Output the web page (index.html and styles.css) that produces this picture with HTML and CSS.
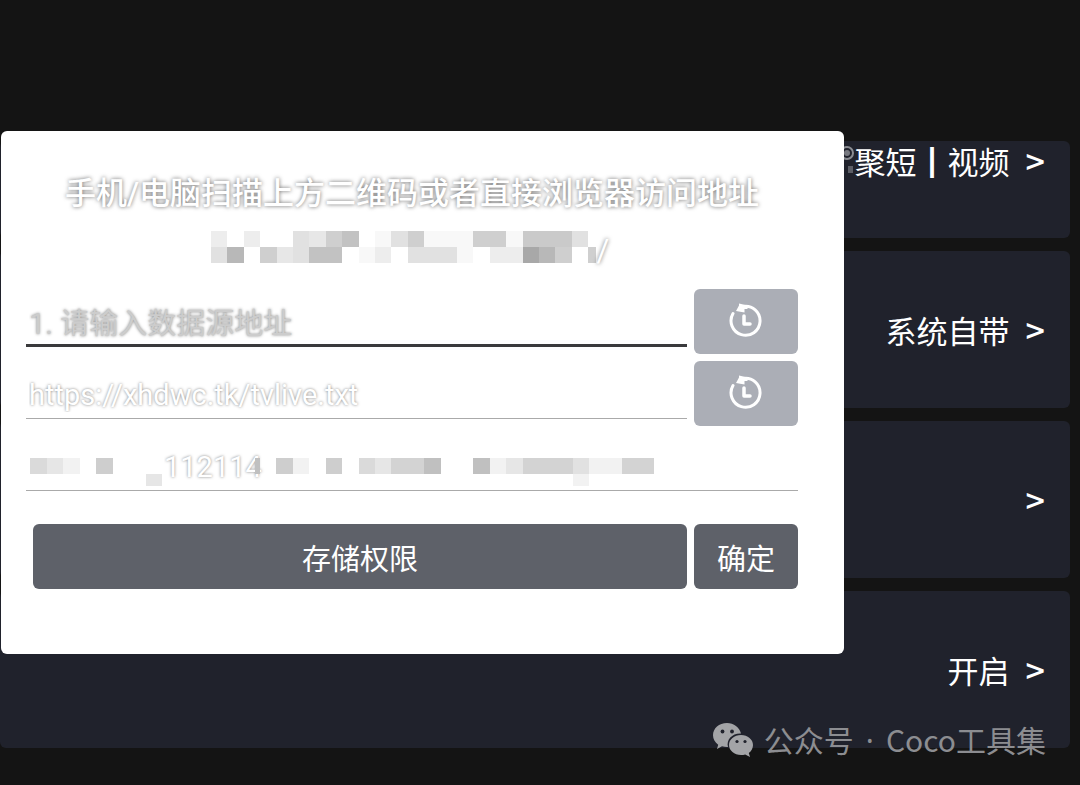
FILE: index.html
```html
<!DOCTYPE html>
<html lang="zh-CN">
<head>
    <meta charset="UTF-8">
    <meta name="viewport" content="width=device-width, initial-scale=1.0">
    <title>设置</title>
    <link rel="stylesheet" href="styles.css">
</head>
<body>

    <!-- Settings list -->
    <main class="settings">
        <a class="setting setting-scrolled" href="#">
            <span class="setting-value">
                <svg class="badge" width="12" height="32" viewBox="0 0 12 32" aria-hidden="true">
                    <circle cx="4" cy="8" r="6" fill="none" stroke="#8a8c92" stroke-width="2"/>
                    <circle cx="4" cy="8" r="3" fill="#777980"/>
                    <rect x="5" y="21" width="5" height="7" fill="#5c5e66"/>
                </svg>聚短┃视频</span>
            <span class="arrow">&gt;</span>
        </a>
        <a class="setting" href="#">
            <span class="setting-value">系统自带</span>
            <span class="arrow">&gt;</span>
        </a>
        <a class="setting" href="#">
            <span class="arrow">&gt;</span>
        </a>
        <a class="setting" href="#">
            <span class="setting-value">开启</span>
            <span class="arrow">&gt;</span>
        </a>
    </main>

    <!-- Data source dialog -->
    <form class="dialog">
        <h1 class="dialog-title">手机/电脑扫描上方二维码或者直接浏览器访问地址</h1>
        <div class="address">
            <svg class="mosaic" width="386" height="40" viewBox="0 0 386 40" shape-rendering="crispEdges" aria-hidden="true">
                <g transform="translate(0 4) scale(16.4 16)">
                    <path fill="#ededed" d="M0 0h1v1H0zM2 0h1v1H2zM10 1h1v1h-1zM17 1h2v1h-2z"/>
                    <path fill="#e1e1e1" d="M5 0h1v1H5zM11 0h1v1h-1zM22 0h1v1h-1zM0 1h1v1H0zM5 1h1v1H5zM12 1h3v1h-3z"/>
                    <path fill="#e7e7e7" d="M6 0h1v1H6zM4 1h1v1H4z"/>
                    <path fill="#cfcfcf" d="M7 0h1v1H7zM12 0h1v1h-1zM16 0h2v1h-2zM3 1h1v1H3zM21 1h1v1h-1zM23 1h.5v1H23z"/>
                    <path fill="#c2c2c2" d="M8 0h1v1H8zM6 1h2v1H6z"/>
                    <path fill="#cacaca" d="M19 0h3v1h-3z"/>
                    <path fill="#f8f8f8" d="M10 0h1v1h-1zM13 0h3v1h-3zM18 0h1v1h-1zM9 1h1v1H9zM15 1h1v1h-1z"/>
                    <path fill="#b8b8b8" d="M1 1h1v1H1zM20 1h1v1h-1z"/>
                    <path fill="#a8a8a8" d="M19 1h1v1h-1z"/>
                </g>
            </svg><span class="address-end">/</span>
        </div>

        <div class="field-row">
            <input class="field field-active" type="text" placeholder="1. 请输入数据源地址" aria-label="数据源地址">
            <button class="btn btn-history" type="button" aria-label="数据源历史">
                <svg width="36" height="36" viewBox="0 0 36 36" fill="none" stroke="#fff" stroke-width="3" aria-hidden="true">
                    <path d="M5 11.500A14.500 14.500 0 1 0 15 4.500" stroke-linecap="round"/>
                    <path d="M16 14v8h6" stroke-width="3.500" stroke-linecap="round" stroke-linejoin="round"/>
                    <path d="M11 1.500v2L8 9l8.500 1.500V7h3V3.500z" fill="#fff" stroke="none"/>
                </svg>
            </button>
        </div>

        <div class="field-row">
            <input class="field" type="text" value="https://xhdwc.tk/tvlive.txt" aria-label="直播地址">
            <button class="btn btn-history" type="button" aria-label="直播历史">
                <svg width="36" height="36" viewBox="0 0 36 36" fill="none" stroke="#fff" stroke-width="3" aria-hidden="true">
                    <path d="M5 11.500A14.500 14.500 0 1 0 15 4.500" stroke-linecap="round"/>
                    <path d="M16 14v8h6" stroke-width="3.500" stroke-linecap="round" stroke-linejoin="round"/>
                    <path d="M11 1.500v2L8 9l8.500 1.500V7h3V3.500z" fill="#fff" stroke="none"/>
                </svg>
            </button>
        </div>

        <div class="field-row">
            <input class="field field-masked" type="text" value="112114" aria-label="备用地址">
            <svg class="field-mosaic" width="640" height="30" viewBox="0 0 640 30" shape-rendering="crispEdges" aria-hidden="true">
                <path fill="#dadada" d="M4 0h17v16H4zM333 0h16v16h-16z"/>
                <path fill="#e6e6e6" d="M21 0h16v16H21zM120 16h16v12h-16zM349 0h16v16h-16zM480 0h17v16h-17z"/>
                <path fill="#f2f2f2" d="M37 0h17v16H37zM267 0h16v16h-16zM464 0h16v16h-16zM563 0h33v16h-33zM547 16h16v12h-16z"/>
                <path fill="#cecece" d="M70 0h17v16H70zM250 0h17v16h-17zM300 0h16v16h-16z"/>
                <path fill="#d3d3d3" d="M365 0h33v16h-33zM497 0h50v16h-50zM596 0h32v16h-32z"/>
                <path fill="#c0c0c0" d="M398 0h17v16h-17zM447 0h17v16h-17zM229 0h5v16h-5z"/>
                <path fill="#e1e1e1" d="M547 0h16v16h-16z"/>
            </svg>
        </div>

        <div class="actions">
            <button class="btn btn-wide" type="button">存储权限</button>
            <button class="btn" type="submit">确定</button>
        </div>
    </form>

    <!-- Watermark -->
    <div class="watermark">
        <svg width="42" height="36" viewBox="0 0 42 36" aria-hidden="true">
            <path fill="#a3a4a7" d="M15 1C7 1 1 6.400 1 13.200c0 3.800 2 7.200 5.200 9.500L5 27l5-2.700c1.600.5 3.300.8 5 .8h1C14 17.500 20.500 11 29 11.500 27.500 5.300 21.800 1 15 1z"/>
            <path fill="#a3a4a7" d="M29 13c-6.700 0-12 4.500-12 10s5.300 10 12 10c1.500 0 2.900-.2 4.200-.6L38 35l-1.200-4c2.600-1.900 4.200-4.700 4.200-8 0-5.500-5.300-10-12-10z"/>
            <g fill="#20222c">
                <circle cx="10.500" cy="9.500" r="1.900"/>
                <circle cx="20" cy="9.500" r="1.900"/>
                <circle cx="25" cy="19.500" r="1.600"/>
                <circle cx="33" cy="19.500" r="1.600"/>
            </g>
        </svg>
        <span>公众号<span class="dot">·</span>Coco工具集</span>
    </div>

</body>
</html>
```
FILE: styles.css
```css
* {
    box-sizing: border-box;
}

body {
    margin: 0;
    min-height: 100vh;
    position: relative;
    font-family: Roboto, "Noto Sans CJK SC", sans-serif;
    background-color: #141414;
    color: #ffffff;
}

/* Settings list */
.settings {
    display: flex;
    flex-direction: column;
    gap: 13px;
    padding: 141px 10px 36px 0;
}

.setting {
    display: flex;
    justify-content: flex-end;
    align-items: center;
    gap: 16px;
    height: 157px;
    padding: 0 25px;
    border-radius: 6px;
    background-color: #20222c;
    color: #ffffff;
    font-family: "Noto Sans CJK SC", sans-serif;
    font-size: 31px;
    line-height: 40px;
    text-decoration: none;
}

/* First row is cut off by the scroll position */
.setting-scrolled {
    height: 97px;
    align-items: flex-start;
}

.setting-value {
    display: flex;
    align-items: center;
}

.arrow {
    font-size: 34px;
    font-weight: 500;
}

/* Dialog */
.dialog {
    position: absolute;
    top: 131px;
    left: 1px;
    right: 236px;
    padding: 40px 46px 65px 25px;
    border-radius: 6px;
    background-color: #ffffff;
}

.dialog-title {
    margin: 0;
    font-size: 31px;
    font-weight: 500;
    line-height: 46px;
    text-align: center;
    text-shadow: 0 0 4px rgba(0, 0, 0, 0.6);
}

.address {
    display: flex;
    justify-content: center;
    align-items: center;
    height: 60px;
    margin-bottom: 12px;
    padding-right: 4px;
    font-size: 31px;
    text-shadow: 0 0 4px rgba(0, 0, 0, 0.6);
}

.address-end {
    padding-top: 6px;
}

/* Fields */
.field-row {
    display: flex;
    gap: 7px;
    height: 65px;
    margin-bottom: 7px;
    position: relative;
}

.field {
    flex: 1;
    min-width: 0;
    height: 58px;
    padding: 10px 3px 0;
    border: none;
    border-bottom: 1px solid #aaaaaa;
    background-color: transparent;
    outline: none;
    color: #ffffff;
    font-family: inherit;
    font-size: 29px;
    text-shadow: 0 0 3px rgba(0, 0, 0, 0.5);
}

.field-active {
    padding-top: 14px;
    border-bottom: 3px solid #3a3a3c;
}

.field::placeholder {
    color: #cccccc;
    opacity: 1;
}

.field-masked {
    padding-left: 138px;
}

.field-mosaic {
    position: absolute;
    top: 25px;
    left: 0;
}

/* Buttons */
.btn {
    display: flex;
    justify-content: center;
    align-items: center;
    width: 104px;
    height: 65px;
    padding: 0;
    border: none;
    border-radius: 6px;
    background-color: #5e6169;
    color: #ffffff;
    font-family: "Noto Sans CJK SC", sans-serif;
    font-size: 29px;
    cursor: pointer;
}

.btn-history {
    padding-bottom: 4px;
    background-color: #abaeb6;
}

.btn-wide {
    flex: 1;
}

.actions {
    display: flex;
    gap: 7px;
    margin-top: 26px;
    padding-left: 7px;
}

/* Watermark */
.watermark {
    position: absolute;
    right: 34px;
    bottom: 24px;
    display: flex;
    align-items: center;
    gap: 10px;
    color: #8c8d91;
    font-family: "Noto Sans CJK SC", sans-serif;
    font-size: 30px;
    line-height: 40px;
}

.watermark .dot {
    padding: 0 12px;
    font-family: "Noto Sans", sans-serif;
}
```
